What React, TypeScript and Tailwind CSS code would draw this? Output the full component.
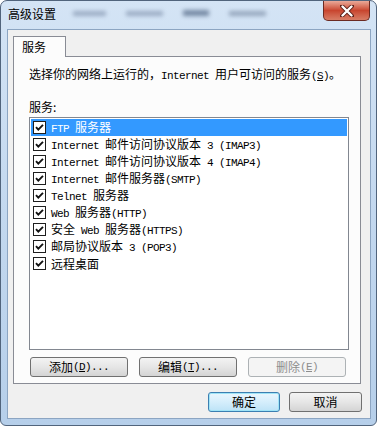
import React from "react";

const services = [
    "FTP 服务器",
    "Internet 邮件访问协议版本 3 (IMAP3)",
    "Internet 邮件访问协议版本 4 (IMAP4)",
    "Internet 邮件服务器(SMTP)",
    "Telnet 服务器",
    "Web 服务器(HTTP)",
    "安全 Web 服务器(HTTPS)",
    "邮局协议版本 3 (POP3)",
    "远程桌面",
];

function Mono({ children }: { children: React.ReactNode }) {
    return <span className="font-['Liberation_Mono',monospace] text-[11px] tracking-[-0.6px] whitespace-pre">{children}</span>
}

// latin runs go mono (6px wide like SimSun), everything else stays CJK
function Mixed({ text }: { text: string }) {
    const parts = text.match(/[\x20-\x7e]+|[^\x20-\x7e]+/g) ?? [];
    return (
        <>
            {parts.map((p, i) =>
                /^[\x20-\x7e]/.test(p)
                    ? <Mono key={i}>{p}</Mono>
                    : <span key={i} className="whitespace-pre">{p}</span>
            )}
        </>
    )
}

function CheckBox() {
    return (
        <svg width="13" height="13" viewBox="0 0 13 13" className="shrink-0">
            <rect x="0.5" y="0.5" width="12" height="12" fill="#fff" stroke="#1e1e1e" />
            <polyline points="3,6.2 5.3,8.6 10,3.8" fill="none" stroke="#111" strokeWidth="1.9" />
        </svg>
    )
}

function ServiceRow({ label, selected }: { label: string; selected?: boolean }) {
    return (
        <div className={"flex items-center h-[17px] pl-[2px] gap-[5px] " + (selected ? "bg-[#3399ff] text-white" : "text-black")}>
            <CheckBox />
            <div className="leading-[17px]"><Mixed text={label} /></div>
        </div>
    )
}

function WinButton({ children, w, primary, disabled }: { children: React.ReactNode; w: string; primary?: boolean; disabled?: boolean }) {
    let cls = "border-[#707070] bg-gradient-to-b from-[#f3f3f3] via-[#e6e6e6] to-[#d4d4d4] text-black";
    if (primary) cls = "border-[#3c7fb1] bg-gradient-to-b from-[#eaf6fd] via-[#d5eefc] to-[#bde3f7] text-black shadow-[inset_0_0_0_1px_#9fe4f7]";
    if (disabled) cls = "border-[#adb2b5] bg-[#f4f4f4] text-[#8d8d8d]";
    return (
        <div className={"h-[20px] rounded-[3px] border flex items-center justify-center " + w + " " + cls}>
            {children}
        </div>
    )
}

function TitleBar() {
    return (
        <div className="h-[28px] flex items-start shrink-0">
            <div className="pl-[7px] pt-[5px] text-[12px] leading-[16px] text-black">高级设置</div>
            <div className="flex items-center gap-[20px] ml-[17px] mt-[9px]">
                <div className="w-[33px] h-[5px] bg-[#7688a3] opacity-60 blur-[2px]" />
                <div className="w-[37px] h-[5px] bg-[#7688a3] opacity-60 blur-[2px]" />
                <div className="w-[26px] h-[6px] bg-[#4f6482] opacity-70 blur-[2px]" />
                <div className="w-[37px] h-[5px] bg-[#6d7f99] opacity-60 blur-[2px]" />
            </div>
            <div className="ml-auto mr-[6px] w-[47px] h-[20px] rounded-b-[5px] border border-t-0 border-[#6b2a22] bg-gradient-to-b from-[#e9a999] via-[#c8452f] to-[#d77d66] flex items-center justify-center">
                <svg width="14" height="12" viewBox="0 0 14 12">
                    <path d="M2 1 L12 11 M12 1 L2 11" stroke="#5a1f18" strokeWidth="4" strokeLinecap="round" />
                    <path d="M2.5 1.5 L11.5 10.5 M11.5 1.5 L2.5 10.5" stroke="#fff" strokeWidth="2.4" strokeLinecap="round" />
                </svg>
            </div>
        </div>
    )
}

export default function App() {
    return (
        <div className="w-[377px] h-[426px] bg-white overflow-hidden font-['Noto_Sans_CJK_SC',sans-serif] text-[12px] text-black">
            <div className="h-full flex flex-col rounded-t-[7px] rounded-b-[6px] border border-[#51647c] bg-gradient-to-b from-[#d4e4f5] via-[#c3d8ef] to-[#b6cfea]">
                <TitleBar />
                <div className="ml-[6px] mr-[5px] mb-[6px] flex-1 border border-[#8ca5c2] bg-[#f0f0f0] flex flex-col">
                    <div className="pl-[5px] pt-[6px]">
                        <div className="relative z-10 -mb-[1px] w-[53px] h-[21px] border border-b-0 border-[#898c95] bg-[#fcfcfc] pl-[8px] leading-[20px]">服务</div>
                        <div className="w-[348px] h-[328px] border border-[#898c95] bg-[#fcfcfc] pl-[15px] pt-[9px] flex flex-col">
                            <div className="leading-[16px]">
                                <Mixed text="选择你的网络上运行的，Internet 用户可访问的服务" />
                                <Mono>(<u>S</u>)</Mono>
                                <span>。</span>
                            </div>
                            <div className="mt-[15px] leading-[16px]">服务:</div>
                            <div className="mt-[2px] w-[320px] h-[233px] border border-[#828790] bg-white p-[1px]">
                                {services.map((s, i) => <ServiceRow key={s} label={s} selected={i === 0} />)}
                            </div>
                            <div className="mt-[7px] flex gap-[11px] pl-[1px]">
                                <WinButton w="w-[98px]">添加<Mono>(<u>D</u>)...</Mono></WinButton>
                                <WinButton w="w-[98px]">编辑<Mono>(<u>T</u>)...</Mono></WinButton>
                                <WinButton w="w-[98px]" disabled>删除<Mono>(<u>E</u>)</Mono></WinButton>
                            </div>
                        </div>
                    </div>
                    <div className="mt-[8px] flex justify-end gap-[9px] pr-[8px]">
                        <WinButton w="w-[72px]" primary>确定</WinButton>
                        <WinButton w="w-[73px]">取消</WinButton>
                    </div>
                </div>
            </div>
        </div>
    )
}
